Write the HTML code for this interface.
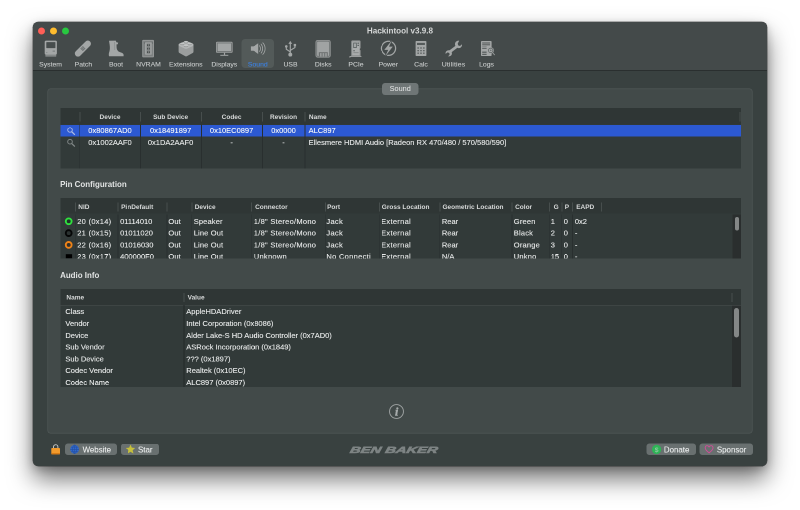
<!DOCTYPE html>
<html><head><meta charset="utf-8"><title>Hackintool v3.9.8</title>
<style>
html,body{margin:0;padding:0;background:#fff;}
body{width:800px;height:510px;overflow:hidden;position:relative;font-family:"Liberation Sans",sans-serif;color:#dfe1e1;}
#win{position:absolute;left:33.2px;top:22.2px;width:733.4px;height:443.9px;border-radius:5.5px;background:#394140;overflow:hidden;
 box-shadow:0 0 0 .5px rgba(0,0,0,.5),0 13px 24px rgba(0,0,0,.55),0 3px 8px rgba(0,0,0,.2);}
#sc{position:absolute;left:-33.2px;top:-22.2px;width:1600px;height:1020px;transform:scale(.5);transform-origin:0 0;will-change:transform;}
#in{position:absolute;left:0;top:0;width:800px;height:510px;zoom:2;}
#in div,#in span{position:absolute;white-space:nowrap;}
#tbar{left:33px;top:22px;width:734px;height:48px;background:#444a4a;border-bottom:1px solid #2a2f2f;}
.dot{width:7px;height:7px;border-radius:50%;top:27.4px;}
#title{left:300px;width:200px;top:25.5px;text-align:center;font-weight:700;font-size:8.1px;line-height:10px;color:#d6d8d8;}
.tl{top:60.7px;width:60px;margin-left:-30px;text-align:center;font-size:6.85px;line-height:8px;color:#c9cccc;-webkit-text-stroke:.1px currentColor;}
#selbg{left:241.5px;top:39px;width:32.5px;height:29px;border-radius:3.5px;background:#535a59;}
#box{left:47.5px;top:88.3px;width:705px;height:345.1px;border-radius:3px;background:#424a49;box-shadow:inset 0 0 0 .6px rgba(255,255,255,.1);}
#tab{left:382px;top:83px;width:36.4px;height:12px;border-radius:3px;background:#6f7676;text-align:center;font-size:7.3px;line-height:11.4px;color:#e8eaea;}
.sec{left:60.1px;font-weight:700;font-size:7.95px;line-height:10px;color:#e3e5e5;}
.tbl{left:60.3px;width:680.7px;background:#323a39;overflow:hidden;}
.hd{left:0;top:0;right:0;background:#2f3635;}
.h{font-weight:700;font-size:6.5px;line-height:8px;color:#d9dbdb;}
.c{font-size:7.5px;line-height:9px;color:#e9ebeb;-webkit-text-stroke:.12px #e9ebeb;}
.vs{width:.7px;background:#292f2f;}
.hs{width:1px;background:#474e4d;}
.btn{top:443.4px;height:11.6px;border-radius:2.8px;background:#697070;font-size:7.9px;line-height:12.6px;color:#eceeee;-webkit-text-stroke:.1px #eceeee;}
</style></head><body>
<div id="win"><div id="sc"><div id="in">
<div id="tbar"></div>
<div class="dot" style="left:38.1px;background:#fe5f57"></div>
<div class="dot" style="left:50px;background:#febc2e"></div>
<div class="dot" style="left:61.85px;background:#28c840"></div>
<div id="title">Hackintool v3.9.8</div>
<div id="selbg"></div>
<div class="tl" style="left:50.6px">System</div>
<div class="tl" style="left:83.4px">Patch</div>
<div class="tl" style="left:116px">Boot</div>
<div class="tl" style="left:148.5px">NVRAM</div>
<div class="tl" style="left:185.8px">Extensions</div>
<div class="tl" style="left:224.3px">Displays</div>
<div class="tl" style="left:257.8px;color:#3b82e6">Sound</div>
<div class="tl" style="left:290.5px">USB</div>
<div class="tl" style="left:323.2px">Disks</div>
<div class="tl" style="left:356px">PCIe</div>
<div class="tl" style="left:388.3px">Power</div>
<div class="tl" style="left:421px">Calc</div>
<div class="tl" style="left:453.5px;letter-spacing:.17px">Utilities</div>
<div class="tl" style="left:486.5px">Logs</div>

<div id="box"></div>
<div id="tab">Sound</div>

<!-- table 1 -->
<div class="tbl" id="t1" style="top:108px;height:60.4px">
 <div class="hd" style="height:16.6px"></div>
 <div style="left:0;top:16.8px;width:680.7px;height:11.7px;background:#2c59d2"></div>
 <div class="vs" style="left:19px;top:16.6px;height:50px"></div>
 <div class="vs" style="left:79.8px;top:16.6px;height:50px"></div>
 <div class="vs" style="left:140.8px;top:16.6px;height:50px"></div>
 <div class="vs" style="left:201.8px;top:16.6px;height:50px"></div>
 <div class="vs" style="left:244.4px;top:16.6px;height:50px"></div>
 <div class="hs" style="left:19px;top:4px;height:9.4px"></div>
 <div class="hs" style="left:79.8px;top:4px;height:9.4px"></div>
 <div class="hs" style="left:140.8px;top:4px;height:9.4px"></div>
 <div class="hs" style="left:201.8px;top:4px;height:9.4px"></div>
 <div class="hs" style="left:244.4px;top:4px;height:9.4px"></div>
 <div class="hs" style="left:679.4px;top:4px;height:9.4px"></div>
 <div class="h" style="left:19.7px;width:60px;text-align:center;top:4.9px">Device</div>
 <div class="h" style="left:80.3px;width:60px;text-align:center;top:4.9px">Sub Device</div>
 <div class="h" style="left:141.3px;width:60px;text-align:center;top:4.9px">Codec</div>
 <div class="h" style="left:202.4px;width:41.6px;text-align:center;top:4.9px">Revision</div>
 <div class="h" style="left:248.6px;top:4.9px">Name</div>
 <div class="c" style="left:19.7px;width:60px;text-align:center;top:18px;color:#fff">0x80867AD0</div>
 <div class="c" style="left:80.3px;width:60px;text-align:center;top:18px;color:#fff">0x18491897</div>
 <div class="c" style="left:141.3px;width:60px;text-align:center;top:18px;color:#fff">0x10EC0897</div>
 <div class="c" style="left:202.4px;width:41.6px;text-align:center;top:18px;color:#fff">0x0000</div>
 <div class="c" style="left:248.3px;top:18px;color:#fff">ALC897</div>
 <div class="c" style="left:19.7px;width:60px;text-align:center;top:29.8px">0x1002AAF0</div>
 <div class="c" style="left:80.3px;width:60px;text-align:center;top:29.8px">0x1DA2AAF0</div>
 <div class="c" style="left:141.3px;width:60px;text-align:center;top:29.8px">-</div>
 <div class="c" style="left:202.4px;width:41.6px;text-align:center;top:29.8px">-</div>
 <div class="c" style="left:248.3px;top:29.8px">Ellesmere HDMI Audio [Radeon RX 470/480 / 570/580/590]</div>
</div>

<div class="sec" style="top:179.6px">Pin Configuration</div>

<!-- table 2 -->
<div class="tbl" id="t2" style="top:198.1px;height:60.2px">
 <div class="hd" style="height:15.3px"></div>
 <div class="h" style="left:18px;top:5.0px">NID</div>
 <div class="h" style="left:60.8px;top:5.0px">PinDefault</div>
 <div class="h" style="left:134.4px;top:5.0px">Device</div>
 <div class="h" style="left:194.8px;top:5.0px">Connector</div>
 <div class="h" style="left:266.8px;top:5.0px">Port</div>
 <div class="h" style="left:321.5px;top:5.0px">Gross Location</div>
 <div class="h" style="left:382.2px;top:5.0px">Geometric Location</div>
 <div class="h" style="left:454.8px;top:5.0px">Color</div>
 <div class="h" style="left:493.3px;top:5.0px">G</div>
 <div class="h" style="left:504.5px;top:5.0px">P</div>
 <div class="h" style="left:515.9px;top:5.0px">EAPD</div>
 <div class="vs" style="left:14.6px;top:16.4px;height:50px"></div>
 <div class="hs" style="left:14.6px;top:4.2px;height:9px"></div>
 <div class="vs" style="left:57.4px;top:16.4px;height:50px"></div>
 <div class="hs" style="left:57.4px;top:4.2px;height:9px"></div>
 <div class="vs" style="left:106.4px;top:16.4px;height:50px"></div>
 <div class="hs" style="left:106.4px;top:4.2px;height:9px"></div>
 <div class="vs" style="left:131px;top:16.4px;height:50px"></div>
 <div class="hs" style="left:131px;top:4.2px;height:9px"></div>
 <div class="vs" style="left:190.7px;top:16.4px;height:50px"></div>
 <div class="hs" style="left:190.7px;top:4.2px;height:9px"></div>
 <div class="vs" style="left:264.5px;top:16.4px;height:50px"></div>
 <div class="hs" style="left:264.5px;top:4.2px;height:9px"></div>
 <div class="vs" style="left:318.5px;top:16.4px;height:50px"></div>
 <div class="hs" style="left:318.5px;top:4.2px;height:9px"></div>
 <div class="vs" style="left:379.2px;top:16.4px;height:50px"></div>
 <div class="hs" style="left:379.2px;top:4.2px;height:9px"></div>
 <div class="vs" style="left:451.4px;top:16.4px;height:50px"></div>
 <div class="hs" style="left:451.4px;top:4.2px;height:9px"></div>
 <div class="vs" style="left:488.7px;top:16.4px;height:50px"></div>
 <div class="hs" style="left:488.7px;top:4.2px;height:9px"></div>
 <div class="vs" style="left:501.1px;top:16.4px;height:50px"></div>
 <div class="hs" style="left:501.1px;top:4.2px;height:9px"></div>
 <div class="vs" style="left:511.9px;top:16.4px;height:50px"></div>
 <div class="hs" style="left:511.9px;top:4.2px;height:9px"></div>
 <div class="hs" style="left:540.6px;top:4.2px;height:9px"></div>
 <div class="c" style="left:16.9px;top:18.7px;width:40px;overflow:hidden;word-spacing:.2px;letter-spacing:.26px">20 (0x14)</div>
 <div class="c" style="left:59.8px;top:18.7px;width:46px;overflow:hidden">01114010</div>
 <div class="c" style="left:108.1px;top:18.7px;width:22px;overflow:hidden;letter-spacing:.1px">Out</div>
 <div class="c" style="left:133.4px;top:18.7px;width:56px;overflow:hidden;letter-spacing:.15px">Speaker</div>
 <div class="c" style="left:193.5px;top:18.7px;width:70px;overflow:hidden;letter-spacing:.27px">1/8&quot; Stereo/Mono</div>
 <div class="c" style="left:266.1px;top:18.7px;width:51.5px;overflow:hidden;letter-spacing:.3px">Jack</div>
 <div class="c" style="left:320.8px;top:18.7px;width:57px;overflow:hidden;letter-spacing:.3px">External</div>
 <div class="c" style="left:381.6px;top:18.7px;width:68px;overflow:hidden">Rear</div>
 <div class="c" style="left:453.5px;top:18.7px;width:34.5px;overflow:hidden;letter-spacing:.2px">Green</div>
 <div class="c" style="left:490.4px;top:18.7px;width:10px;overflow:hidden">1</div>
 <div class="c" style="left:503.4px;top:18.7px;width:8px;overflow:hidden">0</div>
 <div class="c" style="left:514.6px;top:18.7px;width:25px;overflow:hidden">0x2</div>
 <div class="c" style="left:16.9px;top:30.5px;width:40px;overflow:hidden;word-spacing:.2px;letter-spacing:.26px">21 (0x15)</div>
 <div class="c" style="left:59.8px;top:30.5px;width:46px;overflow:hidden">01011020</div>
 <div class="c" style="left:108.1px;top:30.5px;width:22px;overflow:hidden;letter-spacing:.1px">Out</div>
 <div class="c" style="left:133.4px;top:30.5px;width:56px;overflow:hidden;letter-spacing:.15px">Line Out</div>
 <div class="c" style="left:193.5px;top:30.5px;width:70px;overflow:hidden;letter-spacing:.27px">1/8&quot; Stereo/Mono</div>
 <div class="c" style="left:266.1px;top:30.5px;width:51.5px;overflow:hidden;letter-spacing:.3px">Jack</div>
 <div class="c" style="left:320.8px;top:30.5px;width:57px;overflow:hidden;letter-spacing:.3px">External</div>
 <div class="c" style="left:381.6px;top:30.5px;width:68px;overflow:hidden">Rear</div>
 <div class="c" style="left:453.5px;top:30.5px;width:34.5px;overflow:hidden;letter-spacing:.2px">Black</div>
 <div class="c" style="left:490.4px;top:30.5px;width:10px;overflow:hidden">2</div>
 <div class="c" style="left:503.4px;top:30.5px;width:8px;overflow:hidden">0</div>
 <div class="c" style="left:514.6px;top:30.5px;width:25px;overflow:hidden">-</div>
 <div class="c" style="left:16.9px;top:42.3px;width:40px;overflow:hidden;word-spacing:.2px;letter-spacing:.26px">22 (0x16)</div>
 <div class="c" style="left:59.8px;top:42.3px;width:46px;overflow:hidden">01016030</div>
 <div class="c" style="left:108.1px;top:42.3px;width:22px;overflow:hidden;letter-spacing:.1px">Out</div>
 <div class="c" style="left:133.4px;top:42.3px;width:56px;overflow:hidden;letter-spacing:.15px">Line Out</div>
 <div class="c" style="left:193.5px;top:42.3px;width:70px;overflow:hidden;letter-spacing:.27px">1/8&quot; Stereo/Mono</div>
 <div class="c" style="left:266.1px;top:42.3px;width:51.5px;overflow:hidden;letter-spacing:.3px">Jack</div>
 <div class="c" style="left:320.8px;top:42.3px;width:57px;overflow:hidden;letter-spacing:.3px">External</div>
 <div class="c" style="left:381.6px;top:42.3px;width:68px;overflow:hidden">Rear</div>
 <div class="c" style="left:453.5px;top:42.3px;width:34.5px;overflow:hidden;letter-spacing:.2px">Orange</div>
 <div class="c" style="left:490.4px;top:42.3px;width:10px;overflow:hidden">3</div>
 <div class="c" style="left:503.4px;top:42.3px;width:8px;overflow:hidden">0</div>
 <div class="c" style="left:514.6px;top:42.3px;width:25px;overflow:hidden">-</div>
 <div class="c" style="left:16.9px;top:54.1px;width:40px;overflow:hidden;word-spacing:.2px;letter-spacing:.26px">23 (0x17)</div>
 <div class="c" style="left:59.8px;top:54.1px;width:46px;overflow:hidden">400000F0</div>
 <div class="c" style="left:108.1px;top:54.1px;width:22px;overflow:hidden;letter-spacing:.1px">Out</div>
 <div class="c" style="left:133.4px;top:54.1px;width:56px;overflow:hidden;letter-spacing:.15px">Line Out</div>
 <div class="c" style="left:193.5px;top:54.1px;width:70px;overflow:hidden;letter-spacing:.27px">Unknown</div>
 <div class="c" style="left:266.1px;top:54.1px;width:51.5px;overflow:hidden;letter-spacing:.3px">No Connecti</div>
 <div class="c" style="left:320.8px;top:54.1px;width:57px;overflow:hidden;letter-spacing:.3px">External</div>
 <div class="c" style="left:381.6px;top:54.1px;width:68px;overflow:hidden">N/A</div>
 <div class="c" style="left:453.5px;top:54.1px;width:34.5px;overflow:hidden;letter-spacing:.2px">Unkno</div>
 <div class="c" style="left:490.4px;top:54.1px;width:10px;overflow:hidden">15</div>
 <div class="c" style="left:503.4px;top:54.1px;width:8px;overflow:hidden">0</div>
 <div class="c" style="left:514.6px;top:54.1px;width:25px;overflow:hidden">-</div>
 <div style="left:672px;top:16.4px;width:8.7px;height:50px;background:#2a2e2e"></div>
 <div style="left:674.6px;top:19.1px;width:4.3px;height:13.5px;border-radius:2.2px;background:#848787"></div>
</div>

<div class="sec" style="top:270.6px">Audio Info</div>

<!-- table 3 -->
<div class="tbl" id="t3" style="top:289.2px;height:97.9px">
 <div class="hd" style="height:15.6px;border-bottom:.6px solid #4a5150"></div>
 <div class="h" style="left:6.1px;top:4.5px">Name</div>
 <div class="h" style="left:127.3px;top:4.5px">Value</div>
 <div class="vs" style="left:123.2px;top:16px;height:90px;width:.9px;background:#222828"></div>
 <div class="hs" style="left:123.3px;top:3.6px;height:9px"></div>
 <div class="hs" style="left:671.2px;top:3.6px;height:9px"></div>
 <div class="c" style="left:5.1px;top:18.0px">Class</div>
 <div class="c" style="left:126px;top:18.0px">AppleHDADriver</div>
 <div class="c" style="left:5.1px;top:29.8px">Vendor</div>
 <div class="c" style="left:126px;top:29.8px">Intel Corporation (0x8086)</div>
 <div class="c" style="left:5.1px;top:41.6px">Device</div>
 <div class="c" style="left:126px;top:41.6px">Alder Lake-S HD Audio Controller (0x7AD0)</div>
 <div class="c" style="left:5.1px;top:53.4px">Sub Vendor</div>
 <div class="c" style="left:126px;top:53.4px">ASRock Incorporation (0x1849)</div>
 <div class="c" style="left:5.1px;top:65.2px">Sub Device</div>
 <div class="c" style="left:126px;top:65.2px">??? (0x1897)</div>
 <div class="c" style="left:5.1px;top:77.0px">Codec Vendor</div>
 <div class="c" style="left:126px;top:77.0px">Realtek (0x10EC)</div>
 <div class="c" style="left:5.1px;top:88.8px">Codec Name</div>
 <div class="c" style="left:126px;top:88.8px">ALC897 (0x0897)</div>
 <div style="left:671.5px;top:16.2px;width:9.2px;height:90px;background:#2a2e2e"></div>
 <div style="left:673.9px;top:18.9px;width:5px;height:29.4px;border-radius:2.5px;background:#848787"></div>
</div>

<div class="btn" style="left:64.9px;width:52.3px"><span style="left:17.7px">Website</span></div>
<div class="btn" style="left:120.8px;width:38px"><span style="left:17.2px">Star</span></div>
<div class="btn" style="left:646.4px;width:49.4px"><span style="left:17.5px">Donate</span></div>
<div class="btn" style="left:699.4px;width:53.4px"><span style="left:17.5px">Sponsor</span></div>
<div id="logo" style="left:344px;top:445.1px;width:100px;text-align:center;font-weight:700;font-style:italic;font-size:9.1px;line-height:10px;color:#7e8484;transform:scaleX(1.62) skewX(-8deg);-webkit-text-stroke:.6px #7e8484">BEN BAKER</div>
<svg id="ov" width="800" height="510" viewBox="0 0 800 510" style="position:absolute;left:0;top:0">
<g fill="#a3a6a6">
<!-- System -->
<rect x="44.7" y="40.6" width="12.2" height="13.9" rx="1.3"/>
<rect x="46.3" y="42.1" width="9.1" height="6" rx=".5" fill="#474d4d"/>
<rect x="52.6" y="50.7" width="2.4" height=".8" fill="#6b7070"/>
<rect x="46.3" y="52.2" width="1" height=".6" fill="#6b7070"/>
<rect x="45.4" y="54.4" width="10.8" height="2.2" fill="#8d9191"/>
<rect x="45.4" y="55.3" width="10.8" height=".5" fill="#7a7e7e"/>
<!-- Patch -->
<g transform="translate(-.3 0) rotate(-45 83.2 48.6)"><rect x="73.1" y="45.45" width="20.2" height="6.3" rx="3.15"/>
<g fill="#4e5454"><circle cx="81.9" cy="47.3" r=".5"/><circle cx="83.2" cy="47.3" r=".5"/><circle cx="84.5" cy="47.3" r=".5"/><circle cx="81.9" cy="48.6" r=".5"/><circle cx="83.2" cy="48.6" r=".5"/><circle cx="84.5" cy="48.6" r=".5"/><circle cx="81.9" cy="49.9" r=".5"/><circle cx="83.2" cy="49.9" r=".5"/><circle cx="84.5" cy="49.9" r=".5"/></g></g>
<!-- Boot -->
<path d="M109 40.8 L115.8 40.6 L116.4 42.3 L118.2 42.6 L117.8 44.2 L116.5 44.4 L116.6 47.5 C116.8 50 118 51.6 120.3 52.2 C122.4 52.7 123.6 53.6 123.6 55 L123.6 56.2 L109 56.2 C108.6 54.5 108.8 53 109.4 51.5 C110 49.5 110 47 109.6 44.5 Z"/>
<path d="M114.6 42 L114.8 50" stroke="#70757580" stroke-width=".7" fill="none"/>
<!-- NVRAM -->
<rect x="142.2" y="39.9" width="11.8" height="17.5" rx=".9" fill="#939696"/>
<rect x="143.3" y="41" width="9.6" height="15.3" fill="#7c8080"/>
<rect x="145.2" y="42.5" width="6.4" height="12.1" fill="#a6a9a9"/>
<rect x="146.5" y="43.4" width="3.9" height="10.4" fill="#808484"/>
<g fill="#434949"><rect x="147.1" y="44.3" width=".95" height="1.7"/><rect x="148.85" y="44.3" width=".95" height="1.7"/><rect x="147.1" y="47.8" width=".95" height="1.7"/><rect x="148.85" y="47.8" width=".95" height="1.7"/><rect x="147.1" y="51.3" width=".95" height="1.7"/><rect x="148.85" y="51.3" width=".95" height="1.7"/></g>
<path d="M143.7 42.6 L145 42.6 L144.3 43.7 Z M151.8 42.6 L153.1 42.6 L152.5 43.7 Z" fill="#4f5555"/>
<!-- Extensions -->
<path d="M178.6 44.6 L178.6 51.5 C178.6 52.4 179.1 52.9 179.9 53.3 L185.3 56.2 C185.8 56.5 186.3 56.5 186.8 56.2 L192.2 53.3 C193 52.9 193.5 52.4 193.5 51.5 L193.5 44.6 Z" fill="#9b9e9e"/>
<path d="M178.6 44.8 C178.6 43.9 179.6 43.4 181 42.9 L184.2 41.6 C185.4 41.2 186.8 41.2 188 41.6 L191.2 42.9 C192.6 43.4 193.5 43.9 193.5 44.8 C193.5 45.6 192.8 46 191.8 46.5 L187.4 48.5 C186.5 48.9 185.6 48.9 184.7 48.5 L180.3 46.5 C179.3 46 178.6 45.6 178.6 44.8 Z" fill="#b3b6b6"/>
<g fill="#8f9292"><ellipse cx="186" cy="42.5" rx="2" ry=".9"/><ellipse cx="182.3" cy="44.2" rx="2" ry=".9"/><ellipse cx="189.7" cy="44.2" rx="2" ry=".9"/><ellipse cx="186" cy="46.1" rx="2.1" ry="1"/></g>
<g fill="#c3c6c6"><ellipse cx="186" cy="41.8" rx="2" ry=".9"/><ellipse cx="182.3" cy="43.5" rx="2" ry=".9"/><ellipse cx="189.7" cy="43.5" rx="2" ry=".9"/><ellipse cx="186" cy="45.4" rx="2.1" ry="1"/></g>
<!-- Displays -->
<rect x="216" y="41.8" width="16.6" height="11" rx="1.1" fill="#9ea1a1"/>
<rect x="216.8" y="42.6" width="15" height="9.4" rx=".6" fill="#6b7070"/>
<rect x="217.6" y="43.4" width="13.4" height="7.8" fill="#a3a6a6"/>
<rect x="223.9" y="52.8" width="1.2" height="2.3"/>
<rect x="220.3" y="54.8" width="8" height="1.1" fill="#9a9d9d"/>
<!-- Sound -->
<path d="M250.9 46.4 L253.6 46.4 L258.2 43.2 L258.2 54 L253.6 50.7 L250.9 50.7 Z"/>
<g fill="none" stroke="#a3a6a6" stroke-width=".8" stroke-linecap="round"><path d="M259.5 45.7 A4.6 4.6 0 0 1 259.5 51.5"/><path d="M261.1 44.1 A7.4 7.4 0 0 1 261.1 53.1"/><path d="M262.8 42.8 A8.45 8.45 0 0 1 262.8 54.4"/></g>
<!-- USB -->
<g stroke="#a3a6a6" stroke-width="1.15" fill="none"><path d="M290.3 43 L290.3 53.5"/><path d="M290.3 51.9 L286.3 49.2 L286.3 47"/><path d="M290.3 50.4 L294.9 47.6 L294.9 46"/></g>
<path d="M290.3 40.9 L292.2 43.9 L288.4 43.9 Z"/><circle cx="290.3" cy="54.6" r="1.95"/><circle cx="286.3" cy="46.4" r="1.3"/><rect x="293.7" y="43.9" width="2.4" height="2.4"/>
<!-- Disks -->
<rect x="315.5" y="40" width="15.2" height="17.6" rx="2.2" fill="#969999"/><rect x="316.3" y="40.8" width="13.6" height="16" rx="1.6" fill="#6f7474"/><rect x="317.1" y="41.6" width="12" height="14.4" rx="1" fill="#a0a3a3"/>
<rect x="318.8" y="52.2" width="9" height="4.3" fill="#6c7070"/>
<g fill="#9a9d9d"><rect x="320" y="53.1" width="1.6" height="3.4"/><rect x="322.6" y="53.1" width="1.6" height="3.4"/><rect x="325.2" y="53.1" width="1.6" height="3.4"/></g>
<!-- PCIe -->
<path d="M351.2 41.6 C351.2 40.9 351.7 40.4 352.4 40.4 L359.4 40.4 C360.1 40.4 360.6 40.9 360.6 41.6 L360.6 48 L359.6 49.4 L360.6 50.4 L360.6 56 L351.2 56 Z" fill="#8e9191"/>
<rect x="352.2" y="41.4" width="7.4" height="13.8" fill="#a9acac"/>
<rect x="353.2" y="42.6" width="3.6" height="5.4" fill="#5f6565"/><rect x="354.1" y="43.5" width="1.8" height="3.6" fill="#a9acac"/>
<rect x="357.4" y="42.6" width="1.6" height="1.2" fill="#5f6565"/><rect x="357.4" y="44.8" width="1.6" height="1.2" fill="#5f6565"/>
<rect x="353.4" y="50" width="1.3" height="1.3" fill="#5f6565"/><rect x="353.4" y="52.4" width="5.2" height=".7" fill="#777c7c"/>
<rect x="349.6" y="56" width="11.8" height=".9"/><rect x="349.4" y="56.4" width="1" height="1.2"/>
<!-- Power -->
<circle cx="388.5" cy="48.3" r="7.1" fill="none" stroke="#a3a6a6" stroke-width="1.25"/>
<path d="M391.9 40.3 L384.3 49.9 L388.2 49.9 L385.3 56.3 L392.8 46.6 L389 46.6 Z" stroke="#444a4a" stroke-width="1.5" paint-order="stroke" stroke-linejoin="miter"/>
<!-- Calc -->
<rect x="415.6" y="41" width="10.8" height="15" rx=".8"/>
<rect x="417" y="42.9" width="7.9" height="2.1" fill="#555b5b"/>
<g fill="#555b5b"><rect x="417.45" y="47.35" width="1.4" height="1.3"/><rect x="420.30" y="47.35" width="1.4" height="1.3"/><rect x="423.15" y="47.35" width="1.4" height="1.3"/><rect x="417.45" y="50.00" width="1.4" height="1.3"/><rect x="420.30" y="50.00" width="1.4" height="1.3"/><rect x="423.15" y="50.00" width="1.4" height="1.3"/><rect x="417.45" y="52.55" width="1.4" height="1.3"/><rect x="420.30" y="52.55" width="1.4" height="1.3"/><rect x="423.15" y="52.55" width="1.4" height="1.3"/></g>
<!-- Utilities -->
<path d="M459.2 40.7 C457.4 40.5 455.8 41.4 455.2 42.9 C454.8 44 454.9 45 455.4 45.9 L449.6 50.3 C448.4 50 447.2 50.3 446.3 51.2 C445.6 52 445.4 52.9 445.6 53.9 L447.6 52.4 L449.3 53 L449.6 54.8 L448.1 56.3 C449.4 56.6 450.7 56.1 451.5 55 C452 54.2 452.1 53.3 451.69 52.12 L457.39 47.72 C458.6 48.4 459.8 48.2 460.8 47.5 C461.8 46.7 462.2 45.5 462 44.3 L460 46 L458.2 45.4 L457.7 43.6 Z"/>
<!-- Logs -->
<rect x="481" y="41" width="10.6" height="15" rx=".8"/>
<g fill="#535959"><rect x="482.2" y="42.5" width="7.9" height="1"/><rect x="482.2" y="44.3" width="7.9" height="1"/><rect x="482.2" y="46" width="4.4" height=".7" fill="#7b8080"/><rect x="482.2" y="47.8" width="4.4" height="1"/><rect x="482.2" y="51.6" width="4.4" height="1.2"/><rect x="482.2" y="53.8" width="4.4" height="1.1"/></g>
<circle cx="490.7" cy="50.4" r="3.2" fill="#a3a6a6"/><circle cx="490.7" cy="50.4" r="2.6" fill="#5f6565"/><circle cx="490.7" cy="50.4" r="1.8" fill="#a9acac"/><circle cx="490.7" cy="50.4" r=".9" fill="#6f7474"/>
<path d="M492.7 52.6 L494.5 54.8" stroke="#9a9d9d" stroke-width=".9" stroke-linecap="round"/>
</g>
<!-- table magnifiers -->
<g fill="none" stroke-width=".95" stroke-linecap="round"><g stroke="#aebbe3"><circle cx="70" cy="129.9" r="2.3"/><path d="M72 132 L74.5 134.4" stroke-width="1.25"/></g>
<g stroke="#838989"><circle cx="70" cy="141.7" r="2.3"/><path d="M72 143.8 L74.5 146.2" stroke-width="1.25"/></g></g>
<!-- info -->
<circle cx="396.5" cy="411.5" r="6.95" fill="none" stroke="#9fa3a3" stroke-width=".95"/>
<text x="396.6" y="415.6" font-family="Liberation Serif,serif" font-style="italic" font-weight="700" font-size="11.8" fill="#a8acac" stroke="#a8acac" stroke-width=".45" text-anchor="middle">i</text>
<!-- lock -->
<path d="M53.5 448.5 L53.5 446.9 A2.2 2.2 0 0 1 57.9 446.9 L57.9 448.5" fill="none" stroke="#c9c9c6" stroke-width=".95"/>
<rect x="51.3" y="448" width="8.7" height="6.4" rx=".8" fill="#f29a2b"/>
<rect x="51.3" y="453" width="8.7" height="1.4" rx=".6" fill="#d67a15"/>
<!-- globe -->
<circle cx="74.6" cy="449.3" r="4.4" fill="#3068cc"/>
<g fill="none" stroke="#244f9f" stroke-width=".55"><ellipse cx="74.6" cy="449.3" rx="2" ry="4.4"/><path d="M70.2 449.3 H79 M74.6 444.9 V453.7 M71 447.1 H78.2 M71 451.5 H78.2"/></g>
<!-- star -->
<path d="M130.5 444.9 L131.75 447.8 L134.9 448.1 L132.5 450.2 L133.25 453.3 L130.5 451.65 L127.75 453.3 L128.5 450.2 L126.1 448.1 L129.25 447.8 Z" fill="#c6c03c" stroke="#c6c03c" stroke-width=".3" stroke-linejoin="round"/>
<!-- donate -->
<circle cx="656.6" cy="449.4" r="4.7" fill="#2fb457"/>
<text x="656.6" y="451.9" font-family="Liberation Sans,sans-serif" font-weight="700" font-size="6.8" fill="#8ccb9f" text-anchor="middle">$</text>
<!-- heart -->
<path d="M709.1 452.9 C706.6 451 705.2 449.3 705.2 447.8 C705.2 446.5 706.1 445.7 707.1 445.7 C707.95 445.7 708.7 446.15 709.1 447 C709.5 446.15 710.25 445.7 711.1 445.7 C712.1 445.7 713 446.5 713 447.8 C713 449.3 711.6 451 709.1 452.9 Z" fill="none" stroke="#cf4f98" stroke-width=".95" stroke-linejoin="round"/>
<!-- pin circles -->
<g stroke-width="1.9" fill="#20302a"><circle cx="68.7" cy="221.3" r="2.9" stroke="#2fe23e"/><circle cx="68.7" cy="233.1" r="2.9" stroke="#050606" fill="#2a3130"/><circle cx="68.7" cy="244.9" r="2.9" stroke="#ef8318" fill="#33302a"/></g>
<rect x="65.8" y="254.1" width="6.3" height="4.1" fill="#000"/>
</svg>
</div></div></div>
</body></html>
